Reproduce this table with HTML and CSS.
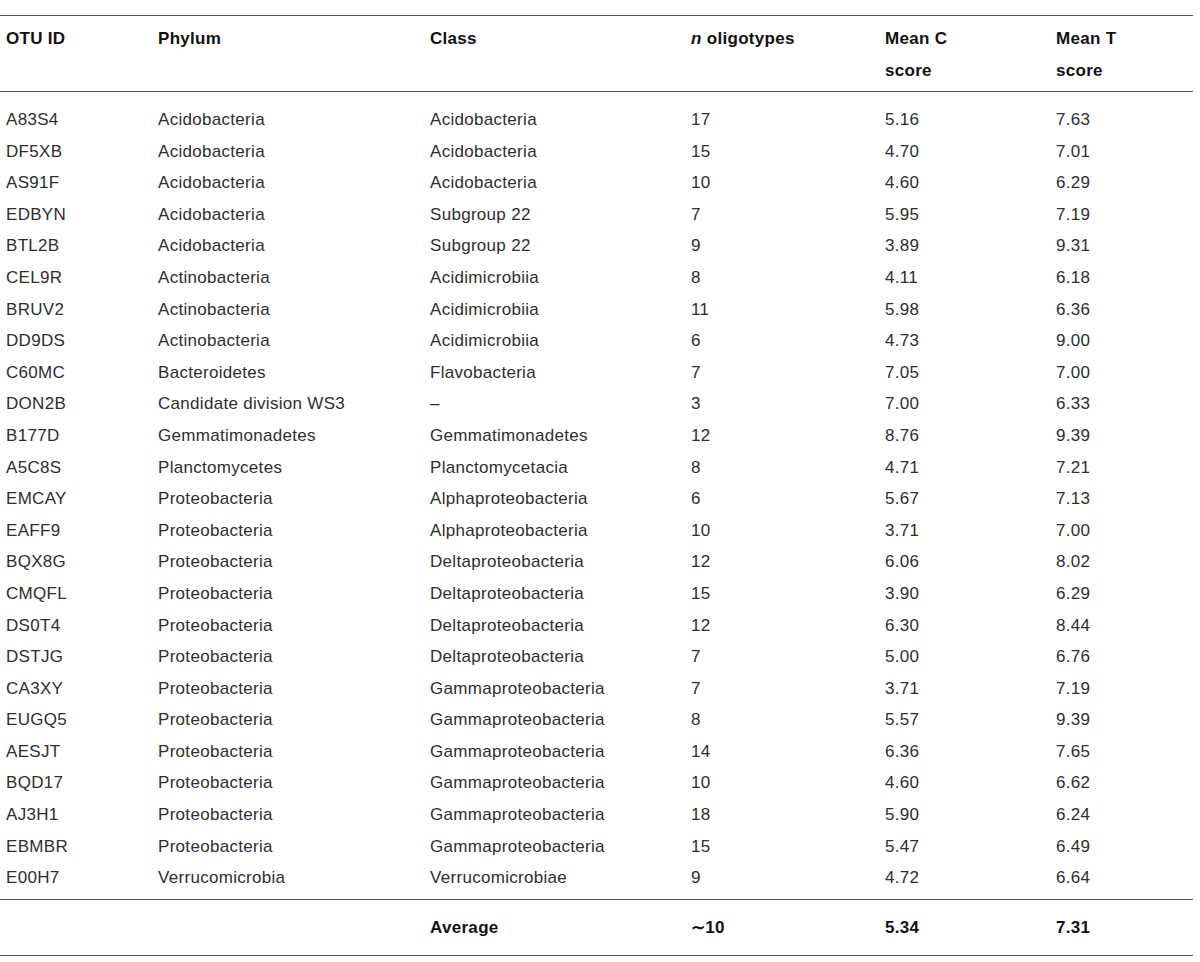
FILE: index.html
```html
<!DOCTYPE html>
<html lang="en">
<head>
<meta charset="utf-8">
<title>OTU oligotypes table</title>
<link rel="stylesheet" href="styles.css">
</head>
<body>
<table class="otu-table">
  <colgroup>
    <col class="c-id">
    <col class="c-phylum">
    <col class="c-class">
    <col class="c-n">
    <col class="c-mc">
    <col class="c-mt">
  </colgroup>
  <thead>
    <tr>
      <th>OTU ID</th>
      <th>Phylum</th>
      <th>Class</th>
      <th><i>n</i> oligotypes</th>
      <th>Mean C<br>score</th>
      <th>Mean T<br>score</th>
    </tr>
  </thead>
  <tbody>
    <tr class="first"><td>A83S4</td><td>Acidobacteria</td><td>Acidobacteria</td><td>17</td><td>5.16</td><td>7.63</td></tr>
    <tr><td>DF5XB</td><td>Acidobacteria</td><td>Acidobacteria</td><td>15</td><td>4.70</td><td>7.01</td></tr>
    <tr><td>AS91F</td><td>Acidobacteria</td><td>Acidobacteria</td><td>10</td><td>4.60</td><td>6.29</td></tr>
    <tr><td>EDBYN</td><td>Acidobacteria</td><td>Subgroup 22</td><td>7</td><td>5.95</td><td>7.19</td></tr>
    <tr><td>BTL2B</td><td>Acidobacteria</td><td>Subgroup 22</td><td>9</td><td>3.89</td><td>9.31</td></tr>
    <tr><td>CEL9R</td><td>Actinobacteria</td><td>Acidimicrobiia</td><td>8</td><td>4.11</td><td>6.18</td></tr>
    <tr><td>BRUV2</td><td>Actinobacteria</td><td>Acidimicrobiia</td><td>11</td><td>5.98</td><td>6.36</td></tr>
    <tr><td>DD9DS</td><td>Actinobacteria</td><td>Acidimicrobiia</td><td>6</td><td>4.73</td><td>9.00</td></tr>
    <tr><td>C60MC</td><td>Bacteroidetes</td><td>Flavobacteria</td><td>7</td><td>7.05</td><td>7.00</td></tr>
    <tr><td>DON2B</td><td>Candidate division WS3</td><td>–</td><td>3</td><td>7.00</td><td>6.33</td></tr>
    <tr><td>B177D</td><td>Gemmatimonadetes</td><td>Gemmatimonadetes</td><td>12</td><td>8.76</td><td>9.39</td></tr>
    <tr><td>A5C8S</td><td>Planctomycetes</td><td>Planctomycetacia</td><td>8</td><td>4.71</td><td>7.21</td></tr>
    <tr><td>EMCAY</td><td>Proteobacteria</td><td>Alphaproteobacteria</td><td>6</td><td>5.67</td><td>7.13</td></tr>
    <tr><td>EAFF9</td><td>Proteobacteria</td><td>Alphaproteobacteria</td><td>10</td><td>3.71</td><td>7.00</td></tr>
    <tr><td>BQX8G</td><td>Proteobacteria</td><td>Deltaproteobacteria</td><td>12</td><td>6.06</td><td>8.02</td></tr>
    <tr><td>CMQFL</td><td>Proteobacteria</td><td>Deltaproteobacteria</td><td>15</td><td>3.90</td><td>6.29</td></tr>
    <tr><td>DS0T4</td><td>Proteobacteria</td><td>Deltaproteobacteria</td><td>12</td><td>6.30</td><td>8.44</td></tr>
    <tr><td>DSTJG</td><td>Proteobacteria</td><td>Deltaproteobacteria</td><td>7</td><td>5.00</td><td>6.76</td></tr>
    <tr><td>CA3XY</td><td>Proteobacteria</td><td>Gammaproteobacteria</td><td>7</td><td>3.71</td><td>7.19</td></tr>
    <tr><td>EUGQ5</td><td>Proteobacteria</td><td>Gammaproteobacteria</td><td>8</td><td>5.57</td><td>9.39</td></tr>
    <tr><td>AESJT</td><td>Proteobacteria</td><td>Gammaproteobacteria</td><td>14</td><td>6.36</td><td>7.65</td></tr>
    <tr><td>BQD17</td><td>Proteobacteria</td><td>Gammaproteobacteria</td><td>10</td><td>4.60</td><td>6.62</td></tr>
    <tr><td>AJ3H1</td><td>Proteobacteria</td><td>Gammaproteobacteria</td><td>18</td><td>5.90</td><td>6.24</td></tr>
    <tr><td>EBMBR</td><td>Proteobacteria</td><td>Gammaproteobacteria</td><td>15</td><td>5.47</td><td>6.49</td></tr>
    <tr class="last"><td>E00H7</td><td>Verrucomicrobia</td><td>Verrucomicrobiae</td><td>9</td><td>4.72</td><td>6.64</td></tr>
  </tbody>
  <tfoot>
    <tr><td></td><td></td><td>Average</td><td>∼10</td><td>5.34</td><td>7.31</td></tr>
  </tfoot>
</table>
</body>
</html>
```

FILE: styles.css
```css
html, body {
  margin: 0;
  padding: 0;
  background: #ffffff;
}

body {
  font-family: "Liberation Sans", Arial, Helvetica, sans-serif;
  font-size: 17px;
  letter-spacing: 0.3px;
  color: #2e2e2e;
}

.otu-table {
  margin-top: 15px;
  width: 1193px;
  table-layout: fixed;
  border-collapse: collapse;
  border-top: 1px solid #555555;
  border-bottom: 1px solid #555555;
}

.c-id { width: 152px; }
.c-phylum { width: 272px; }
.c-class { width: 261px; }
.c-n { width: 194px; }
.c-mc { width: 171px; }
.c-mt { width: 143px; }

.otu-table th,
.otu-table td {
  padding: 0 0 0 6px;
  text-align: left;
  vertical-align: top;
  white-space: nowrap;
}

.otu-table thead th {
  font-weight: bold;
  color: #111111;
  line-height: 32px;
  padding-top: 7px;
  padding-bottom: 4px;
  border-bottom: 1px solid #555555;
}

.otu-table tbody td {
  line-height: 31.6px;
}

.otu-table tbody tr.first td {
  padding-top: 12px;
}

.otu-table tbody tr.last td {
  padding-bottom: 5px;
}

.otu-table tfoot td {
  font-weight: bold;
  color: #111111;
  line-height: 31.6px;
  padding-top: 12px;
  padding-bottom: 12px;
  border-top: 1px solid #555555;
}
```
